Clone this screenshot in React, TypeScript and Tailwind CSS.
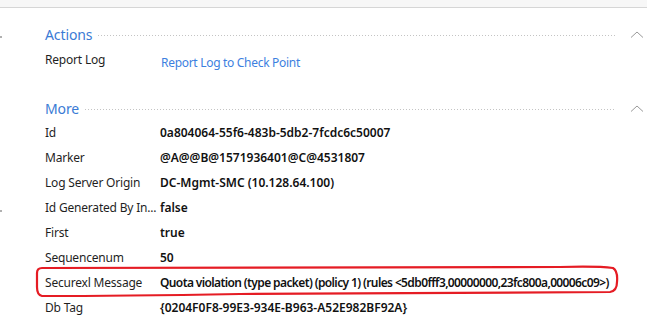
import { ReactNode } from 'react'

const font = { fontFamily: '"Noto Sans", "Open Sans", sans-serif' }

const dots = 'flex-1 h-px bg-[repeating-linear-gradient(90deg,#c4c4c4_0_1px,transparent_1px_3px)]'

function Chevron() {
  return (
    <svg width="14" height="8" viewBox="0 0 14 8" className="ml-[15px] mr-[1px] -mt-[1px]">
      <polyline points="1,6.5 7,1 13,6.5" fill="none" stroke="#9a9a9a" strokeWidth="1" />
    </svg>
  )
}

function SectionHeader({ title }: { title: string }) {
  return (
    <div className="flex items-center h-5">
      <span className="text-[14px] leading-none text-[#3a7bd5] mr-[6px] tracking-[-0.1px]">{title}</span>
      <div className={dots} />
      <Chevron />
    </div>
  )
}

function Row({ label, tight, children }: { label: string; tight?: boolean; children: ReactNode }) {
  return (
    <div className="flex items-center h-[25px] text-[12px] leading-none">
      <span className="w-[115px] shrink-0 text-[#1f1f1f] whitespace-nowrap tracking-[-0.2px]">{label}</span>
      <span className={`font-semibold text-[#111] whitespace-nowrap ${tight ? 'tracking-[-0.62px]' : ''}`}>
        {children}
      </span>
    </div>
  )
}

const rows: [string, string][] = [
  ['Id', '0a804064-55f6-483b-5db2-7fcdc6c50007'],
  ['Marker', '@A@@B@1571936401@C@4531807'],
  ['Log Server Origin', 'DC-Mgmt-SMC (10.128.64.100)'],
  ['Id Generated By In...', 'false'],
  ['First', 'true'],
  ['Sequencenum', '50'],
  ['Securexl Message', 'Quota violation (type packet) (policy 1) (rules <5db0fff3,00000000,23fc800a,00006c09>)'],
  ['Db Tag', '{0204F0F8-99E3-934E-B963-A52E982BF92A}'],
]

export default function App() {
  return (
    <div className="relative w-[647px] h-[324px] bg-white overflow-hidden" style={font}>
      <div className="h-[8px] bg-[#f7f7f7] border-b border-[#d6d6d6]" />

      {/* cut-off marks at the left edge */}
      <div className="absolute left-0 top-[36px] w-[2px] h-[2px] bg-[#b0b0b0]" />
      <div className="absolute left-0 top-[210px] w-[2px] h-[2px] bg-[#b0b0b0]" />

      <div className="pl-[45px] pr-[2px]">
        <div className="mt-[17px]">
          <SectionHeader title="Actions" />
        </div>
        <div className="mt-[1px] flex items-start h-[25px] text-[12px] leading-none">
          <span className="w-[116px] shrink-0 pt-[8px] text-[#1f1f1f] tracking-[-0.2px]">Report Log</span>
          <span className="pt-[11px] text-[#3d7fe0] tracking-[-0.3px]">Report Log to Check Point</span>
        </div>

        <div className="mt-[28px]">
          <SectionHeader title="More" />
        </div>
        <div className="mt-[1px]">
          {rows.map(([l, v]) => (
            <Row key={l} label={l} tight={l === 'Securexl Message'}>{v}</Row>
          ))}
        </div>
      </div>

      {/* red annotation around the Securexl row */}
      <svg className="absolute left-0 top-0 pointer-events-none" width="647" height="324">
        <path
          d="M 42 268 L 560 267 Q 598 266 613 268 Q 618 271 617 282 Q 617 291 610 292 L 240 294 Q 120 296 42 296 Q 37 295 37 287 L 37 273 Q 37 268 42 268 Z"
          fill="none"
          stroke="#e51c24"
          strokeWidth="2.2"
        />
      </svg>
    </div>
  )
}
